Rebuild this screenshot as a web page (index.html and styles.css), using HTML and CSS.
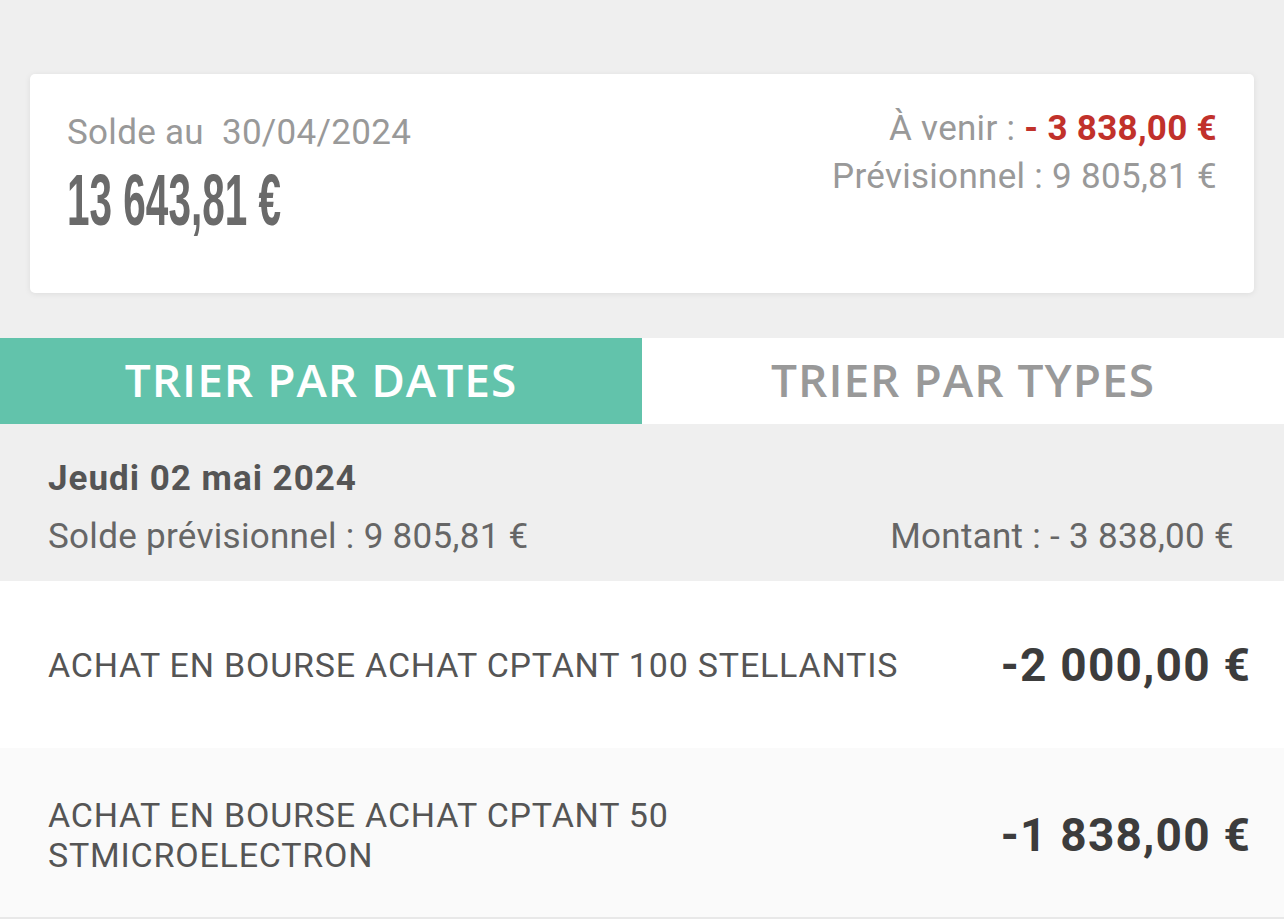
FILE: index.html
```html
<!DOCTYPE html>
<html lang="fr">
<head>
    <meta charset="UTF-8">
    <meta name="viewport" content="width=device-width, initial-scale=1.0">
    <title>Solde</title>
    <link rel="stylesheet" href="styles.css">
</head>
<body>
    <div class="top">
        <div class="card">
            <div class="card-left">
                <div class="solde-label">Solde au&nbsp; 30/04/2024</div>
                <div class="solde-amount"><span>13 643,81 €</span></div>
            </div>
            <div class="card-right">
                <div class="avenir">À venir : <span class="neg">- 3 838,00 €</span></div>
                <div class="prev">Prévisionnel : 9 805,81 €</div>
            </div>
        </div>
    </div>

    <div class="tabs">
        <div class="tab active">TRIER PAR DATES</div>
        <div class="tab">TRIER PAR TYPES</div>
    </div>

    <div class="day-head">
        <div class="day-title">Jeudi 02 mai 2024</div>
        <div class="day-sub">
            <span>Solde prévisionnel : 9 805,81 €</span>
            <span>Montant : - 3 838,00 €</span>
        </div>
    </div>

    <div class="op">
        <div class="op-label">ACHAT EN BOURSE ACHAT CPTANT 100 STELLANTIS</div>
        <div class="op-amount">-2 000,00 €</div>
    </div>
    <div class="op alt">
        <div class="op-label">ACHAT EN BOURSE ACHAT CPTANT 50<br>STMICROELECTRON</div>
        <div class="op-amount">-1 838,00 €</div>
    </div>
</body>
</html>
```

FILE: styles.css
```css
body {
    margin: 0;
    background: #efefef;
    font-family: Roboto, "Liberation Sans", sans-serif;
    color: #555;
}
.top {
    padding: 74px 30px 45px;
}
.card {
    background: #fff;
    border-radius: 5px;
    box-shadow: 0 1px 6px rgba(0,0,0,0.08);
    height: 219px;
    box-sizing: border-box;
    padding: 31px 37px 0 37px;
    display: flex;
    justify-content: space-between;
}
.card-left {
    padding-top: 6px;
}
.solde-label {
    font-size: 35px;
    letter-spacing: 0.3px;
    color: #999;
    line-height: 44px;
}
.solde-amount {
    margin-top: 10px;
    height: 70px;
}
.solde-amount span {
    display: inline-block;
    font-family: "Liberation Sans", sans-serif;
    font-weight: 700;
    font-size: 73px;
    line-height: 70px;
    color: #6a6a6a;
    transform: scaleX(0.555);
    transform-origin: left center;
    white-space: nowrap;
}
.card-right {
    text-align: right;
    font-size: 35px;
    letter-spacing: 0.3px;
    color: #999;
    line-height: 48px;
}
.neg {
    color: #c1312b;
    font-weight: 700;
}
.tabs {
    display: flex;
    height: 86px;
    background: #fff;
}
.tab {
    flex: 1;
    display: flex;
    align-items: center;
    justify-content: center;
    padding-bottom: 4px;
    font-family: "Open Sans", sans-serif;
    font-weight: 600;
    font-size: 46px;
    color: #999;
    letter-spacing: 1px;
}
.tab.active {
    background: #62c3ab;
    color: #fff;
}
.day-head {
    padding: 31px 50px 0 48px;
    height: 157px;
    box-sizing: border-box;
}
.day-title {
    font-weight: 700;
    font-size: 35px;
    letter-spacing: 1px;
    line-height: 48px;
}
.day-sub {
    margin-top: 10px;
    display: flex;
    justify-content: space-between;
    font-size: 35px;
    letter-spacing: 0.3px;
    line-height: 48px;
    color: #666;
}
.op {
    background: #fff;
    height: 167px;
    display: flex;
    align-items: center;
    justify-content: space-between;
    padding: 0 33px 0 48px;
}
.op.alt {
    background: #fafafa;
    height: 171px;
    padding-top: 4px;
    box-sizing: border-box;
    border-bottom: 2px solid #e8e8e8;
}
.op-label {
    font-size: 34px;
    letter-spacing: 0.8px;
    line-height: 40px;
    color: #555;
}
.op-amount {
    font-size: 46px;
    letter-spacing: 1.2px;
    font-weight: 700;
    color: #3c3c3c;
}
```
